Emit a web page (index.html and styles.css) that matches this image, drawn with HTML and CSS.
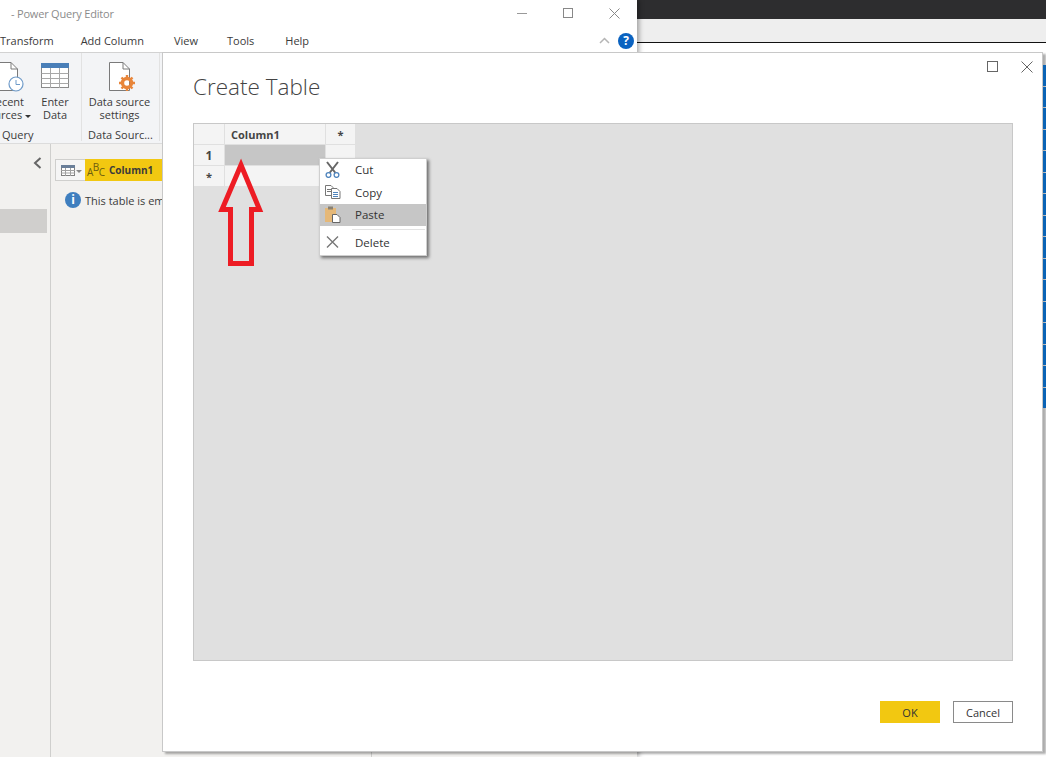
FILE: index.html
```html
<!DOCTYPE html>
<html lang="en">
<head>
  <meta charset="UTF-8" />
  <title>Create Table</title>
  <link rel="stylesheet" href="styles.css">
</head>
<body>

  <!-- window behind the editor -->
  <div class="back-app">
    <div class="back-dark"></div>
    <div class="back-strip"></div>
    <div class="back-stripes">
      <i></i><i></i><i></i><i></i><i></i><i></i><i></i><i></i><i></i><i></i><i></i><i></i><i></i><i></i><i></i><i></i>
    </div>
  </div>

  <!-- Power Query Editor -->
  <div class="editor">
    <div class="titlebar">
      <span class="title-text">- Power Query Editor</span>
      <svg class="win-btn btn-min" width="10" height="10" viewBox="0 0 10 10"><path d="M0 5.5H10" stroke="#999" fill="none"/></svg>
      <svg class="win-btn btn-max" width="10" height="10" viewBox="0 0 10 10"><rect x=".5" y=".5" width="9" height="9" stroke="#888" fill="none"/></svg>
      <svg class="win-btn btn-close" width="11" height="11" viewBox="0 0 11 11"><path d="M.5 .5L10.5 10.5M10.5 .5L.5 10.5" stroke="#888" fill="none"/></svg>
    </div>

    <div class="menubar">
      <span class="tab tab-transform">Transform</span>
      <span class="tab tab-add">Add Column</span>
      <span class="tab tab-view">View</span>
      <span class="tab tab-tools">Tools</span>
      <span class="tab">Help</span>
      <svg class="collapse" width="11" height="7" viewBox="0 0 11 7"><path d="M1 6L5.5 1.5L10 6" stroke="#b5b5b5" stroke-width="1.5" fill="none"/></svg>
      <span class="help">?</span>
    </div>

    <div class="ribbon">
      <div class="group group-query">
        <div class="group-items">
          <div class="rib-btn btn-recent">
            <svg class="rib-icon" width="34" height="30" viewBox="0 0 34 30">
              <path d="M.5 .5H15L21.5 7V28.5H.5Z" fill="#fff" stroke="#7a7a7a"/>
              <path d="M15 .5V7H21.5" fill="none" stroke="#7a7a7a"/>
              <circle cx="20" cy="22" r="7" fill="#fff" stroke="#6f9bc9" stroke-width="1.2"/>
              <path d="M20 18V22.5H24" fill="none" stroke="#6f9bc9"/>
            </svg>
            <span>Recent<br>Sources<b class="caret"></b></span>
          </div>
          <div class="rib-btn btn-enter">
            <svg class="rib-icon" width="28" height="30" viewBox="0 -1 28 30">
              <rect x=".5" y=".5" width="27" height="24" fill="#fff" stroke="#8a8a8a"/>
              <rect x="0" y="0" width="28" height="5" fill="#4a7fb8"/>
              <path d="M.5 10.5H27.5M.5 15.5H27.5M.5 20.5H27.5M9.5 5V25M18.5 5V25" stroke="#a8a8a8" fill="none"/>
            </svg>
            <span>Enter<br>Data</span>
          </div>
        </div>
        <div class="group-name">Query</div>
      </div>
      <div class="group group-source">
        <div class="group-items">
          <div class="rib-btn btn-settings">
            <svg class="rib-icon" width="30" height="30" viewBox="0 0 30 30">
              <path d="M.5 .5H14L20.5 7V28.5H.5Z" fill="#fff" stroke="#7a7a7a"/>
              <path d="M14 .5V7H20.5" fill="none" stroke="#7a7a7a"/>
              <circle cx="18" cy="21" r="4.5" fill="none" stroke="#e8853a" stroke-width="3.4"/>
              <path d="M18 13V29M10 21H26M12.5 15.5L23.5 26.5M23.5 15.5L12.5 26.5" stroke="#e8853a" stroke-width="2.4" stroke-dasharray="2.6 10.8" fill="none"/>
            </svg>
            <span>Data source<br>settings</span>
          </div>
        </div>
        <div class="group-name">Data Sourc...</div>
      </div>
    </div>

    <div class="workspace">
      <div class="queries">
        <svg class="chevron" width="9" height="12" viewBox="0 0 9 12"><path d="M7.5 1L2 6L7.5 11" stroke="#666" stroke-width="2" fill="none"/></svg>
        <div class="query-row"></div>
      </div>
      <div class="preview">
        <div class="col-strip">
          <div class="col-table">
            <svg width="14" height="11" viewBox="0 0 14 11">
              <rect x=".5" y=".5" width="13" height="10" fill="#fff" stroke="#808080"/>
              <rect x="0" y="0" width="14" height="3" fill="#6a7f99"/>
              <path d="M0 5.5H14M0 8H14M4.5 3V11M9.5 3V11" stroke="#a0a0a0" fill="none"/>
            </svg>
            <b class="caret caret-gray"></b>
          </div>
          <div class="col-head">
            <span class="abc"><i>A</i><i class="abc-b">B</i><i>C</i></span>
            <span class="col-name">Column1</span>
          </div>
        </div>
        <div class="notice">
          <span class="info">i</span>
          <span>This table is empty.</span>
        </div>
      </div>
      <div class="details"></div>
    </div>
  </div>

  <!-- Create Table dialog -->
  <div class="dialog">
    <svg class="dlg-btn dlg-max" width="11" height="11" viewBox="0 0 11 11"><rect x=".5" y=".5" width="10" height="10" stroke="#666" fill="none"/></svg>
    <svg class="dlg-btn dlg-close" width="12" height="12" viewBox="0 0 12 12"><path d="M.5 .5L11.5 11.5M11.5 .5L.5 11.5" stroke="#666" fill="none"/></svg>

    <h1 class="dlg-title">Create Table</h1>

    <div class="grid-area">
      <div class="grid">
        <div class="cell"></div>
        <div class="cell cell-head">Column1</div>
        <div class="cell cell-star">*</div>
        <div class="cell cell-num">1</div>
        <div class="cell cell-sel"></div>
        <div class="cell"></div>
        <div class="cell cell-star">*</div>
        <div class="cell"></div>
        <div class="cell"></div>
      </div>
    </div>

    <div class="dlg-actions">
      <button class="btn btn-ok">OK</button>
      <button class="btn btn-cancel">Cancel</button>
    </div>
  </div>

  <!-- right click menu -->
  <div class="ctx-menu">
    <div class="ctx-item">
      <svg class="ctx-icon" width="16" height="17" viewBox="0 0 16 17">
        <path d="M2 1L10.5 12M13 1L4.5 12" stroke="#666" stroke-width="2" fill="none"/>
        <circle cx="3.5" cy="14" r="2.4" fill="#fff" stroke="#4f84bd" stroke-width="1.3"/>
        <circle cx="11.5" cy="14" r="2.4" fill="#fff" stroke="#4f84bd" stroke-width="1.3"/>
      </svg>
      <span>Cut</span>
    </div>
    <div class="ctx-item">
      <svg class="ctx-icon" width="16" height="14" viewBox="0 0 16 14">
        <path d="M.5 .5H6L8 2.5V10.5H.5Z" fill="#fff" stroke="#777"/>
        <path d="M2 4.5H6M2 6.5H6" stroke="#777" fill="none"/>
        <path d="M6.5 3.5H12L15 6.5V13.5H6.5Z" fill="#fff" stroke="#777"/>
        <path d="M8 7.5H13M8 9.5H13M8 11.5H13" stroke="#4f84bd" fill="none"/>
      </svg>
      <span>Copy</span>
    </div>
    <div class="ctx-item ctx-active">
      <svg class="ctx-icon" width="16" height="17" viewBox="0 0 16 17">
        <rect x="0" y="2" width="11" height="14" fill="#e5b878"/>
        <rect x="3" y="0.5" width="5" height="3" fill="#8a8172"/>
        <path d="M7.5 8.5H12L15 11.5V16.5H7.5Z" fill="#fff" stroke="#666"/>
      </svg>
      <span>Paste</span>
    </div>
    <div class="ctx-sep"></div>
    <div class="ctx-item">
      <svg class="ctx-icon" width="16" height="12" viewBox="0 0 16 12">
        <path d="M2 .5L13 11.5M13 .5L2 11.5" stroke="#777" stroke-width="1.4" fill="none"/>
      </svg>
      <span>Delete</span>
    </div>
  </div>

  <!-- red arrow drawn over the screenshot -->
  <svg class="red-arrow" width="50" height="112" viewBox="0 0 50 112">
    <path d="M24 9L42.5 53.5H34.5V107.5H13.5V53.5H5Z" fill="none" stroke="#ed1c24" stroke-width="5"/>
  </svg>

</body>
</html>
```

FILE: styles.css
```css
* {
  box-sizing: border-box;
}
html, body {
  margin: 0;
  height: 100%;
}
body {
  position: relative;
  width: 1046px;
  height: 757px;
  overflow: hidden;
  background: #fff;
  font-family: "Open Sans", "Noto Sans", sans-serif;
  font-size: 11px;
  color: #3b3b3b;
}

/* window behind */
.back-app {
  position: absolute;
  left: 637px;
  top: 0;
  right: 0;
  bottom: 0;
  background: #fff;
}
.back-dark {
  height: 19px;
  background: #2d2d2f;
}
.back-strip {
  height: 24px;
  background: #eeeeee;
  border-bottom: 1px solid #111;
}
.back-stripes {
  position: absolute;
  z-index: 1;
  right: 0;
  top: 65px;
  width: 3px;
  height: 343px;
  display: flex;
  flex-direction: column;
  gap: 1px;
}
.back-stripes i {
  flex: 1;
  background: #0a63b5;
}

/* editor */
.editor {
  position: absolute;
  left: 0;
  top: 0;
  width: 637px;
  height: 757px;
  display: flex;
  flex-direction: column;
  background: #fff;
  box-shadow: 2px 0 5px rgba(0, 0, 0, .35);
}
.titlebar {
  height: 28px;
  position: relative;
  flex: none;
}
.title-text {
  position: absolute;
  left: 11px;
  top: 6px;
  font-size: 11px;
  letter-spacing: -.2px;
  color: #8b8b8b;
}
.win-btn {
  position: absolute;
  top: 8px;
}
.btn-min { left: 517px; }
.btn-max { left: 563px; }
.btn-close { left: 609px; }

.menubar {
  height: 25px;
  flex: none;
  display: flex;
  align-items: center;
  position: relative;
  border-bottom: 1px solid #d2d2d2;
}
.tab {
  white-space: nowrap;
}
.tab-transform { margin-right: 27px; }
.tab-add { margin-right: 30px; }
.tab-view { margin-right: 29px; }
.tab-tools { margin-right: 31px; }
.collapse {
  position: absolute;
  left: 599px;
  top: 9px;
}
.help {
  position: absolute;
  left: 618px;
  top: 5px;
  width: 16px;
  height: 16px;
  border-radius: 50%;
  background: #0a62c0;
  color: #fff;
  font-weight: 700;
  font-size: 12px;
  line-height: 16px;
  text-align: center;
}

.ribbon {
  height: 91px;
  flex: none;
  display: flex;
  background: #f3f4f6;
  border-bottom: 1px solid #dcdcdc;
}
.group {
  display: flex;
  flex-direction: column;
  border-right: 1px solid #e2e2e2;
  margin-bottom: 2px;
}
.group-query {
  width: 110px;
  margin-left: -28px;
}
.group-source {
  width: 78px;
}
.group-items {
  flex: 1;
  display: flex;
}
.group-name {
  height: 14px;
  line-height: 16px;
  text-align: center;
  white-space: nowrap;
}
.group-query .group-name {
  text-align: left;
  padding-left: 30px;
}
.rib-btn {
  display: flex;
  flex-direction: column;
  align-items: center;
  text-align: center;
  line-height: 13px;
  padding-top: 9px;
}
.rib-icon {
  display: block;
  flex: none;
  margin-bottom: 3px;
}
.btn-recent {
  width: 69px;
}
.btn-recent .rib-icon { margin-left: 12px; }
.btn-enter {
  width: 28px;
}
.btn-settings {
  width: 75px;
}
.btn-settings .rib-icon { margin-left: 9px; }
.caret {
  display: inline-block;
  margin-left: 3px;
  vertical-align: middle;
  border: 3px solid transparent;
  border-top: 3px solid #333;
  border-bottom: 0;
}
.caret-gray {
  border-top-color: #888;
}

.workspace {
  flex: 1;
  display: flex;
  background: #f2f1ef;
}
.queries {
  width: 51px;
  flex: none;
  border-right: 1px solid #cfcfcd;
  position: relative;
}
.chevron {
  position: absolute;
  left: 33px;
  top: 13px;
}
.query-row {
  position: absolute;
  left: 0;
  top: 65px;
  width: 47px;
  height: 24px;
  background: #d0cfcd;
}
.preview {
  width: 321px;
  flex: none;
  border-right: 1px solid #cfcfcd;
  padding: 15px 0 0 4px;
  overflow: hidden;
  white-space: nowrap;
}
.col-strip {
  display: flex;
  height: 22px;
}
.col-table {
  width: 30px;
  border: 1px solid #cfcfcd;
  border-right: 0;
  display: flex;
  align-items: center;
  padding-left: 5px;
  background: #f5f5f5;
}
.col-table .caret {
  margin-left: 1px;
  margin-top: 3px;
}
.col-head {
  width: 280px;
  background: #f2c811;
  display: flex;
  align-items: center;
}
.abc {
  display: flex;
  width: 22px;
  margin-left: 2px;
  color: #6b5d10;
  font-size: 10px;
}
.abc i {
  font-style: normal;
  margin-right: -.5px;
  transform: translateY(2px);
}
.abc .abc-b {
  transform: translateY(-3px);
}
.col-name {
  font-size: 10px;
  font-weight: 700;
  color: #3b3b3b;
}
.notice {
  display: flex;
  align-items: center;
  gap: 4px;
  margin: 11px 0 0 10px;
}
.info {
  width: 16px;
  height: 16px;
  border-radius: 50%;
  background: #3f7fbf;
  color: #fff;
  font-weight: 700;
  font-size: 12px;
  line-height: 16px;
  text-align: center;
}
.details {
  flex: 1;
}

/* dialog */
.dialog {
  position: absolute;
  left: 162px;
  top: 52px;
  width: 881px;
  height: 700px;
  background: #fff;
  border: 1px solid #c8c8c8;
  box-shadow: 3px 2px 2px rgba(0, 0, 0, .32);
  padding: 0 29px 0 30px;
  display: flex;
  flex-direction: column;
}
.dlg-btn {
  position: absolute;
  top: 8px;
}
.dlg-max { left: 824px; }
.dlg-close { left: 858px; }
.dlg-title {
  margin: 0;
  height: 70px;
  line-height: 68px;
  font-size: 22.5px;
  font-weight: 300;
  color: #444;
}
.grid-area {
  height: 538px;
  flex: none;
  background: #e0e0e0;
  border: 1px solid #c8c8c8;
}
.grid {
  display: grid;
  grid-template-columns: 31px 101px 30px;
  grid-template-rows: repeat(3, 21px);
  width: 162px;
}
.cell {
  background: #f4f4f4;
  border-right: 1px solid #e0e0e0;
  border-bottom: 1px solid #e0e0e0;
  display: flex;
  align-items: center;
  justify-content: center;
  font-weight: 700;
  color: #444;
}
.cell-head {
  justify-content: flex-start;
  padding-left: 6px;
}
.cell-num {
  font-size: 12px;
}
.cell-sel {
  background: #c6c6c6;
}
.dlg-actions {
  display: flex;
  justify-content: flex-end;
  gap: 13px;
  margin-top: 40px;
}
.btn {
  width: 60px;
  height: 22px;
  padding: 0;
  font: inherit;
  color: #333;
  border: 1px solid #8a8a8a;
  background: #fff;
}
.btn-ok {
  background: #f2c811;
  border-color: #f2c811;
}

/* right click menu */
.ctx-menu {
  position: absolute;
  left: 319px;
  top: 158px;
  width: 108px;
  height: 98px;
  background: #fff;
  border: 1px solid #cfcfcf;
  box-shadow: 2px 2px 3px rgba(0, 0, 0, .5);
}
.ctx-item {
  height: 22px;
  padding-bottom: 2px;
  display: flex;
  align-items: center;
  font-size: 11.5px;
  color: #333;
}
.ctx-item:first-child {
  height: 23px;
}
.ctx-active {
  background: #c6c6c6;
}
.ctx-icon {
  flex: none;
  margin-left: 5px;
  margin-right: 14px;
}
.ctx-sep {
  height: 1px;
  margin: 3px 1px 2px 32px;
  background: #e2e2e2;
}
.red-arrow {
  position: absolute;
  left: 217px;
  top: 156px;
}
```
